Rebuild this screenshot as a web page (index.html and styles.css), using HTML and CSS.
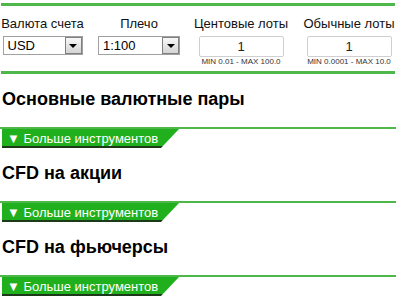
FILE: index.html
```html
<!DOCTYPE html>
<html lang="ru">
  <head>
    <meta charset="UTF-8" />
    <meta name="viewport" content="width=device-width, initial-scale=1.0" />
    <title>Калькулятор</title>
    <link rel="stylesheet" href="styles.css">
  </head>
  <body>
    <div class="settings">
      <div class="col col-currency">
        <label>Валюта счета</label>
        <div class="select sel-currency">
          <span>USD</span>
          <span class="drop"></span>
        </div>
      </div>
      <div class="col col-leverage">
        <label>Плечо</label>
        <div class="select sel-leverage">
          <span>1:100</span>
          <span class="drop"></span>
        </div>
      </div>
      <div class="col col-cent">
        <label>Центовые лоты</label>
        <input type="text" value="1" />
        <small>MIN 0.01 - MAX 100.0</small>
      </div>
      <div class="col col-std">
        <label>Обычные лоты</label>
        <input type="text" value="1" />
        <small>MIN 0.0001 - MAX 10.0</small>
      </div>
    </div>

    <div class="section">
      <h2>Основные валютные пары</h2>
      <div class="more">
        <a class="tab" href="#">▼ Больше инструментов</a>
      </div>
    </div>
    <div class="section">
      <h2>CFD на акции</h2>
      <div class="more">
        <a class="tab" href="#">▼ Больше инструментов</a>
      </div>
    </div>
    <div class="section">
      <h2>CFD на фьючерсы</h2>
      <div class="more">
        <a class="tab" href="#">▼ Больше инструментов</a>
      </div>
    </div>
  </body>
</html>
```

FILE: styles.css
```css
body {
  margin: 0;
  font-family: "Liberation Sans", Arial, sans-serif;
  color: #111;
  background: #fff;
}
.settings {
  display: flex;
  margin: 3px 1px 0;
  padding: 10px 0 4px;
  border-top: 3px solid #4db849;
  border-bottom: 3px solid #4db849;
}
.col {
  display: flex;
  flex-direction: column;
  align-items: center;
}
.col label {
  font-size: 13px;
  line-height: 15px;
  margin-bottom: 5px;
  white-space: nowrap;
}
.col-currency {
  width: 83px;
}
.col-leverage {
  width: 110px;
}
.col-cent {
  width: 94px;
}
.col-std {
  width: 90px;
  margin-left: 16px;
}
.select {
  display: flex;
  align-items: center;
  justify-content: space-between;
  height: 19px;
  box-sizing: border-box;
  border: 1px solid #a0a0a0;
  background: #fff;
  font-size: 13px;
  color: #000;
  padding: 0 0 0 4px;
}
.sel-currency {
  width: 80px;
}
.sel-leverage {
  width: 82px;
}
.drop {
  width: 17px;
  height: 17px;
  box-sizing: border-box;
  border: 1px solid #808080;
  background: linear-gradient(#f8f8f8, #d4d4d4);
  display: flex;
  align-items: center;
  justify-content: center;
}
.drop::after {
  content: "";
  border-left: 4px solid transparent;
  border-right: 4px solid transparent;
  border-top: 4px solid #000;
  margin-top: 1px;
}
.col input {
  width: 85px;
  height: 21px;
  box-sizing: border-box;
  border: 1px solid #cfcfcf;
  border-radius: 2px;
  text-align: center;
  font-family: inherit;
  font-size: 13px;
  color: #222;
  padding: 0;
}
.col small {
  font-size: 8px;
  line-height: 10px;
  color: #333;
  white-space: nowrap;
}
.section h2 {
  margin: 15px 0 17px 2px;
  font-size: 18px;
  font-weight: bold;
  color: #000;
}
.more {
  border-top: 2px solid #4db849;
}
.tab {
  display: block;
  width: 177px;
  height: 19px;
  margin-left: 2px;
  box-sizing: border-box;
  padding: 2px 0 0 5px;
  background: linear-gradient(#21b01d 0 17px, #1c3a1a 17px);
  clip-path: polygon(0 0, 100% 0, 159px 100%, 0 100%);
  color: #fff;
  font-size: 13px;
  line-height: 15px;
  text-decoration: none;
  white-space: nowrap;
}
```
